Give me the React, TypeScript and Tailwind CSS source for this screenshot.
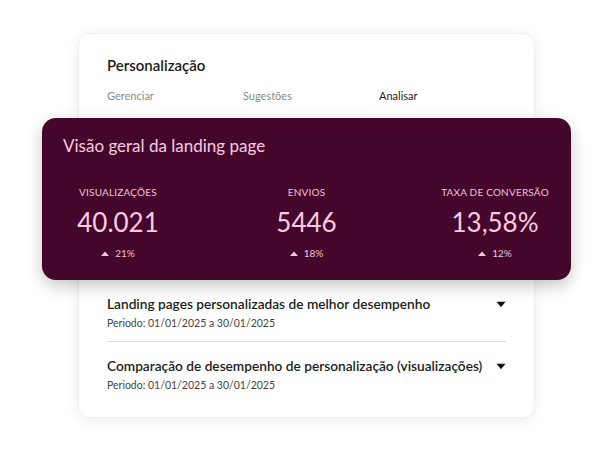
import { ReactNode } from 'react'

function Caret() {
  return (
    <svg width="10" height="7" viewBox="0 0 10 7" className="shrink-0">
      <path d="M0.5 0.8h9L5 6.2z" fill="#111" />
    </svg>
  )
}

function Up() {
  return (
    <svg width="8" height="5" viewBox="0 0 8 5">
      <path d="M0 5L4 0.6 8 5z" fill="#f7c6e0" />
    </svg>
  )
}

function Stat({ label, value, change }: { label: string; value: string; change: string }) {
  return (
    <div className="w-[110px] flex flex-col items-center">
      <div className="text-[10px] leading-[14px] tracking-[0.02em] text-[#f3c1dc] whitespace-nowrap">{label}</div>
      <div className="mt-[7px] text-[26px] leading-[32px] text-[#f9cbe3] whitespace-nowrap">{value}</div>
      <div className="mt-[8px] flex items-center gap-[6px] text-[10px] leading-[14px] text-[#f3c1dc]">
        <Up />
        {change}
      </div>
    </div>
  )
}

function Report({ title, children }: { title: string; children?: ReactNode }) {
  return (
    <div>
      <div className="flex items-center justify-between">
        <div className="text-[13.7px] leading-[18px] font-semibold text-[#1d1d1d]">{title}</div>
        <Caret />
      </div>
      <div className="mt-[2px] text-[10.5px] leading-[16px] text-[#444]">Periodo: 01/01/2025 a 30/01/2025</div>
      {children}
    </div>
  )
}

export default function App() {
  return (
    <div className="w-[600px] h-[450px] bg-white pt-[33px] font-['Lato',sans-serif] overflow-hidden">
      <div className="ml-[78px] w-[457px] rounded-[12px] bg-white border border-[#f0f0f0] shadow-[0_2px_14px_rgba(0,0,0,0.08)] px-[28px] pt-[21px] pb-[24px]">
        <div className="text-[15px] leading-[20px] font-semibold text-[#1b1b1b]">Personalização</div>
        <div className="mt-[13px] flex text-[11px] leading-[16px]">
          <div className="w-[136px] text-[#8a8a8a]">Gerenciar</div>
          <div className="w-[136px] text-[#8a8a8a]">Sugestões</div>
          <div className="text-[#1b1b1b]">Analisar</div>
        </div>

        <div className="mt-[14px] -mx-[65px] rounded-[14px] bg-[#45062b] shadow-[0_6px_16px_rgba(0,0,0,0.22)] px-[21px] pt-[16px] pb-[20px]">
          <div className="text-[17px] leading-[24px] text-[#f9cbe3]">Visão geral da landing page</div>
          <div className="mt-[27px] flex justify-between">
            <Stat label="VISUALIZAÇÕES" value="40.021" change="21%" />
            <Stat label="ENVIOS" value="5446" change="18%" />
            <Stat label="TAXA DE CONVERSÃO" value="13,58%" change="12%" />
          </div>
        </div>

        <div className="mt-[15px]">
          <Report title="Landing pages personalizadas de melhor desempenho">
            <div className="mt-[10px] border-t border-[#dcdcdc]" />
          </Report>
          <div className="mt-[15px]">
            <Report title="Comparação de desempenho de personalização (visualizações)" />
          </div>
        </div>
      </div>
    </div>
  )
}
